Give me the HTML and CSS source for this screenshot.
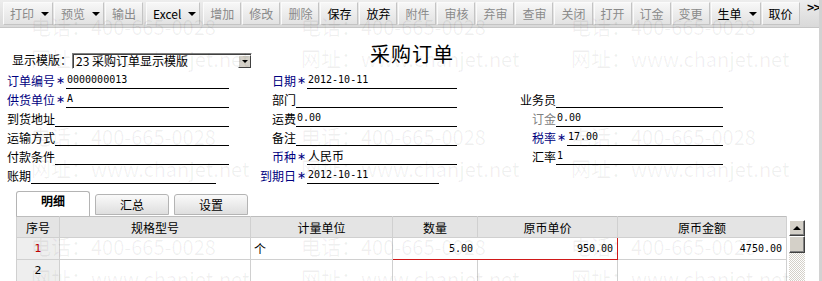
FILE: index.html
```html
<!DOCTYPE html>
<html lang="zh-CN">
<head>
  <meta charset="UTF-8" />
  <title>采购订单</title>
  <link rel="stylesheet" href="styles.css">
</head>
<body>
  <div class="window">
    <div class="toolbar">
      <span class="tb-btn drop">打印<i class="caret"></i></span>
      <span class="tb-btn drop">预览<i class="caret"></i></span>
      <span class="tb-btn sep">输出</span>
      <span class="tb-btn drop on sep">Excel<i class="caret"></i></span>
      <span class="tb-btn">增加</span>
      <span class="tb-btn">修改</span>
      <span class="tb-btn">删除</span>
      <span class="tb-btn on">保存</span>
      <span class="tb-btn on">放弃</span>
      <span class="tb-btn">附件</span>
      <span class="tb-btn">审核</span>
      <span class="tb-btn">弃审</span>
      <span class="tb-btn">查审</span>
      <span class="tb-btn">关闭</span>
      <span class="tb-btn">打开</span>
      <span class="tb-btn">订金</span>
      <span class="tb-btn">变更</span>
      <span class="tb-btn drop on">生单<i class="caret"></i></span>
      <span class="tb-btn on">取价</span>
      <span class="tb-more">&gt;&gt;</span>
    </div>

    <div class="form">
      <div class="form-head">
        <span class="tpl-label">显示模版：</span>
        <div class="select">
          <span class="select-text">23 采购订单显示模版</span>
          <span class="select-btn"><i></i></span>
        </div>
        <h1 class="title">采购订单</h1>
      </div>

      <div class="form-row">
        <div class="field c1"><span class="lbl req">订单编号</span><span class="star">∗</span><span class="val">0000000013</span></div>
        <div class="field c2"><span class="lbl req">日期</span><span class="star">∗</span><span class="val">2012-10-11</span></div>
        <div class="field c3"></div>
      </div>
      <div class="form-row">
        <div class="field c1"><span class="lbl req">供货单位</span><span class="star">∗</span><span class="val">A</span></div>
        <div class="field c2"><span class="lbl">部门</span><span class="val"></span></div>
        <div class="field c3"><span class="lbl">业务员</span><span class="val"></span></div>
      </div>
      <div class="form-row">
        <div class="field c1"><span class="lbl">到货地址</span><span class="val"></span></div>
        <div class="field c2"><span class="lbl">运费</span><span class="val">0.00</span></div>
        <div class="field c3"><span class="lbl off">订金</span><span class="val">0.00</span></div>
      </div>
      <div class="form-row">
        <div class="field c1"><span class="lbl">运输方式</span><span class="val"></span></div>
        <div class="field c2"><span class="lbl">备注</span><span class="val"></span></div>
        <div class="field c3"><span class="lbl req">税率</span><span class="star">∗</span><span class="val">17.00</span></div>
      </div>
      <div class="form-row">
        <div class="field c1"><span class="lbl">付款条件</span><span class="val"></span></div>
        <div class="field c2"><span class="lbl req">币种</span><span class="star">∗</span><span class="val cjk">人民币</span></div>
        <div class="field c3"><span class="lbl">汇率</span><span class="val">1</span></div>
      </div>
      <div class="form-row">
        <div class="field c1 narrow"><span class="lbl">账期</span><span class="val"></span></div>
        <div class="field c2 narrow"><span class="lbl req">到期日</span><span class="star">∗</span><span class="val">2012-10-11</span></div>
        <div class="field c3"></div>
      </div>
    </div>

    <div class="tabs">
      <span class="tab active">明细</span>
      <span class="tab">汇总</span>
      <span class="tab">设置</span>
    </div>

    <div class="grid-wrap">
      <table class="grid">
        <colgroup>
          <col class="w-no"><col class="w-spec"><col class="w-unit"><col class="w-qty"><col class="w-price"><col class="w-amount">
        </colgroup>
        <thead>
          <tr><th>序号</th><th>规格型号</th><th>计量单位</th><th>数量</th><th>原币单价</th><th>原币金额</th></tr>
        </thead>
        <tbody>
          <tr>
            <td class="no cur">1</td><td></td><td>个</td>
            <td class="num sel-a">5.00</td><td class="num sel-b">950.00</td><td class="num">4750.00</td>
          </tr>
          <tr>
            <td class="no">2</td><td></td><td></td><td></td><td></td><td></td>
          </tr>
        </tbody>
      </table>
      <div class="vscroll">
        <span class="sb-btn"><i class="up"></i></span>
        <span class="sb-thumb"></span>
        <span class="sb-track"></span>
      </div>
    </div>

    <div class="watermark">
      <span>电话：400-665-0028</span><span>电话：400-665-0028</span><span>电话：400-665-0028</span>
      <span>网址：www.chanjet.net</span><span>网址：www.chanjet.net</span><span>网址：www.chanjet.net</span>
      <span>电话：400-665-0028</span><span>电话：400-665-0028</span><span>电话：400-665-0028</span>
      <span>网址：www.chanjet.net</span><span>网址：www.chanjet.net</span><span>网址：www.chanjet.net</span>
      <span>电话：400-665-0028</span><span>电话：400-665-0028</span><span>电话：400-665-0028</span>
      <span>网址：www.chanjet.net</span><span>网址：www.chanjet.net</span><span>网址：www.chanjet.net</span>
    </div>
  </div>
</body>
</html>
```

FILE: styles.css
```css
body {
  margin: 0;
  font: 12px "Noto Sans CJK SC", "Liberation Sans", sans-serif;
  color: #000;
  background: #fff;
}

.window {
  position: relative;
  width: 819px;
  height: 281px;
  overflow: hidden;
  border-right: 3px solid #d2d2d2;
}

/* toolbar */
.toolbar {
  display: flex;
  align-items: center;
  height: 27px;
  padding-left: 3px;
  background: linear-gradient(#ededed, #d9d9d9);
  border-bottom: 1px solid #c6c6c6;
}

.tb-btn {
  display: flex;
  align-items: center;
  height: 21px;
  padding: 0 6px;
  margin-right: 1px;
  border: 1px solid;
  border-color: #fbfbfb #c4c4c4 #c4c4c4 #fbfbfb;
  background: linear-gradient(#f7f7f7, #e2e2e2);
  color: #8a8a8a;
  line-height: 21px;
  white-space: nowrap;
}

.tb-btn.on {
  color: #000;
}

.tb-btn.drop {
  padding-right: 3px;
}

.tb-btn.sep {
  margin-right: 3px;
}

.caret {
  width: 0;
  height: 0;
  margin-left: 7px;
  border-left: 4px solid transparent;
  border-right: 4px solid transparent;
  border-top: 4px solid #000;
}

.tb-more {
  align-self: flex-start;
  margin: 2px 0 0 6px;
  font: bold 10px "DejaVu Sans", sans-serif;
  letter-spacing: -2px;
}

/* form */
.form {
  padding-left: 7px;
}

.form-head {
  display: flex;
  align-items: flex-start;
  height: 42px;
}

.tpl-label {
  margin: 24px 0 0 5px;
  line-height: 16px;
}

.select {
  display: flex;
  justify-content: space-between;
  box-sizing: border-box;
  width: 180px;
  height: 16px;
  margin-top: 25px;
  border: 1px solid;
  border-color: #808080 #fff #fff #808080;
  box-shadow: inset 1px 1px #404040;
  background: #fff;
}

.select-text {
  padding: 0 0 0 3px;
  line-height: 14px;
}

.select-btn {
  display: flex;
  align-items: center;
  justify-content: center;
  box-sizing: border-box;
  width: 13px;
  height: 13px;
  margin: 1px 0 0 0;
  background: #d4d0c8;
  border: 1px solid;
  border-color: #fff #404040 #404040 #fff;
}

.select-btn i {
  width: 0;
  height: 0;
  border-left: 3px solid transparent;
  border-right: 3px solid transparent;
  border-top: 3px solid #000;
}

.title {
  margin: 14px 0 0 118px;
  font-size: 20px;
  font-weight: normal;
  line-height: 24px;
  letter-spacing: 1px;
}

.form-row {
  display: grid;
  grid-template-columns: 250px 253px 1fr;
  height: 19px;
}

.field {
  display: flex;
  align-items: flex-end;
}

.c1 {
  width: 222px;
}

.c1.narrow {
  width: 209px;
}

.c2 {
  width: 200px;
}

.c2.narrow {
  width: 182px;
}

.c3 {
  width: 213px;
}

.lbl {
  line-height: 17px;
  white-space: nowrap;
}

.c2 .lbl {
  width: 39px;
  text-align: right;
}

.c3 .lbl {
  width: 46px;
  text-align: right;
}

.lbl.req,
.star {
  color: #000080;
}

.lbl.off {
  color: #808080;
}

.star {
  width: 11px;
  text-align: center;
  font: 11px/16px "DejaVu Sans", sans-serif;
}

.val {
  flex: 1;
  height: 16px;
  padding-left: 1px;
  border-bottom: 1px solid #000;
  font: 10px/15px "DejaVu Sans Mono", monospace;
  white-space: nowrap;
}

.val.cjk {
  font: 12px/16px "Noto Sans CJK SC", sans-serif;
}

/* tabs */
.tabs {
  display: flex;
  align-items: flex-end;
  gap: 5px;
  height: 25px;
  margin-top: 7px;
  padding-left: 16px;
}

.tab {
  box-sizing: border-box;
  width: 74px;
  height: 21px;
  margin-bottom: 1px;
  border: 1px solid #b4b4b4;
  border-radius: 3px 3px 0 0;
  background: linear-gradient(#fafafa, #dedede);
  text-align: center;
  line-height: 19px;
}

.tab.active {
  height: 25px;
  margin-bottom: 0;
  border-bottom: none;
  background: #fff;
  font-weight: bold;
  line-height: 18px;
}

/* grid */
.grid-wrap {
  display: flex;
  margin-left: 16px;
}

.grid {
  border-collapse: collapse;
  table-layout: fixed;
  width: 770px;
}

.w-no { width: 43px; }
.w-spec { width: 191px; }
.w-unit { width: 142px; }
.w-qty { width: 85px; }
.w-price { width: 140px; }
.w-amount { width: 169px; }

.grid th,
.grid td {
  height: 21px;
  box-sizing: border-box;
  padding: 0 3px;
  border: 1px solid #d0d0d0;
  white-space: nowrap;
}

.grid th {
  background: #e4e4e4;
  font-weight: normal;
  border-top-color: #bdbdbd;
}

.grid td.no {
  background: #eeeeee;
  text-align: center;
  font: 11px "DejaVu Sans", sans-serif;
}

.grid td.cur {
  color: #c00000;
}

.grid td.num {
  text-align: right;
  padding-right: 4px;
  font: 10px "DejaVu Sans Mono", monospace;
}

.grid td.sel-a {
  border: 1px solid #d01818;
  border-right-color: #fff;
}

.grid td.sel-b {
  border: 1px solid #d01818;
}

.vscroll {
  display: flex;
  flex-direction: column;
  width: 16px;
  height: 62px;
  margin: 4px 0 0 2px;
}

.sb-btn,
.sb-thumb {
  display: flex;
  align-items: center;
  justify-content: center;
  box-sizing: border-box;
  height: 16px;
  background: #d4d0c8;
  border: 1px solid;
  border-color: #fff #404040 #404040 #fff;
  box-shadow: inset -1px -1px #808080;
}

.sb-thumb {
  height: 17px;
}

.sb-btn .up {
  width: 0;
  height: 0;
  border-left: 4px solid transparent;
  border-right: 4px solid transparent;
  border-bottom: 4px solid #000;
}

.sb-track {
  flex: 1;
  background: repeating-conic-gradient(#fff 0 25%, #d4d0c8 0 50%) 0 0 / 2px 2px;
}

/* watermark over the whole window */
.watermark {
  position: absolute;
  top: 16px;
  left: 31px;
  display: grid;
  grid-template-columns: repeat(3, 270px);
  grid-template-rows: repeat(3, 32px 78px);
  font: 20px/22px "Noto Sans CJK SC", sans-serif;
  color: rgba(0, 0, 0, 0.06);
  white-space: nowrap;
  pointer-events: none;
}
```
